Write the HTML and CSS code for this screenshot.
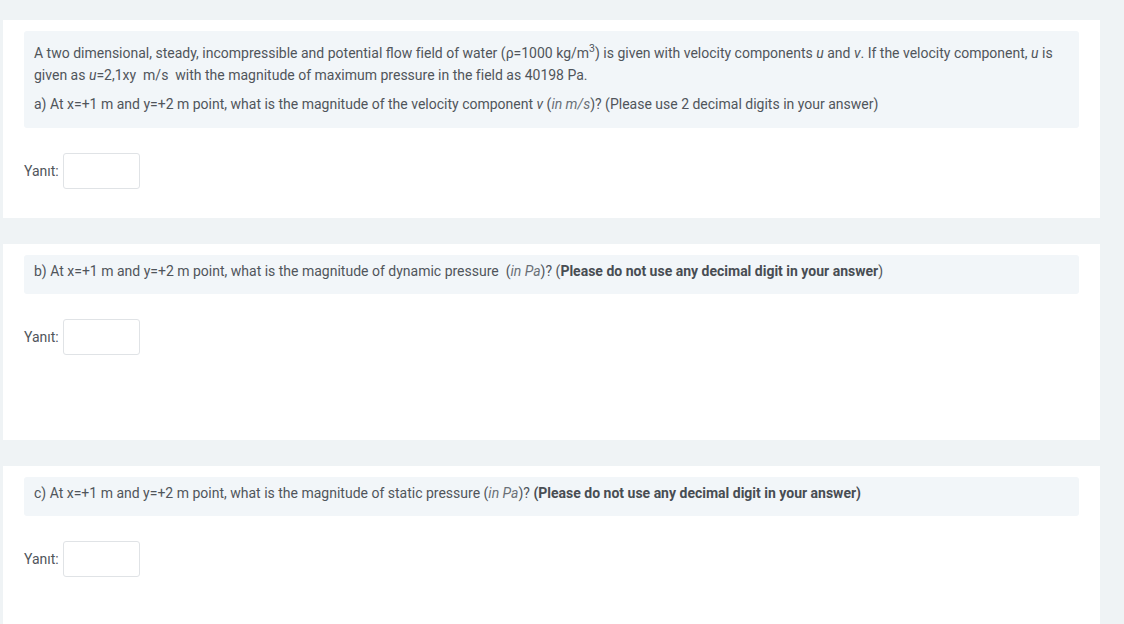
FILE: index.html
```html
<!DOCTYPE html>
<html lang="tr">
<head>
<meta charset="utf-8">
<title>Quiz</title>
<link rel="stylesheet" href="styles.css">
</head>
<body>
<div class="page">
  <div class="que que-first">
    <div class="qtext qtext-multi">
      <p>A two dimensional, steady, incompressible and potential flow field of water (ρ=1000 kg/m<sup>3</sup>) is given with velocity components <i>u</i> and <i>v</i>. If the velocity component, <i>u</i> is given as <i>u</i>=2,1xy&nbsp; m/s&nbsp; with the magnitude of maximum pressure in the field as 40198 Pa.</p>
      <p>a) At x=+1 m and y=+2 m point, what is the magnitude of the velocity component <i>v</i> <span class="unit">(<i>in m/s</i>)</span>? (Please use 2 decimal digits in your answer)</p>
    </div>
    <div class="answer">
      <label class="answer-label" for="a1">Yanıt:</label>
      <input class="answer-input" id="a1" type="text">
    </div>
  </div>

  <div class="que que-second">
    <div class="qtext">
      <p>b) At x=+1 m and y=+2 m point, what is the magnitude of dynamic pressure&nbsp; <span class="unit">(<i>in Pa</i>)</span>? (<b>Please do not use any decimal digit in your answer</b>)</p>
    </div>
    <div class="answer">
      <label class="answer-label" for="a2">Yanıt:</label>
      <input class="answer-input" id="a2" type="text">
    </div>
  </div>

  <div class="que que-third">
    <div class="qtext">
      <p>c) At x=+1 m and y=+2 m point, what is the magnitude of static pressure <span class="unit">(<i>in Pa</i>)</span>? <b>(Please do not use any decimal digit in your answer)</b></p>
    </div>
    <div class="answer">
      <label class="answer-label" for="a3">Yanıt:</label>
      <input class="answer-input" id="a3" type="text">
    </div>
  </div>
</div>
</body>
</html>
```

FILE: styles.css
```css
html, body {
  margin: 0;
  padding: 0;
  background: #eff3f5;
}

body {
  font-family: Roboto, "Liberation Sans", Arial, sans-serif;
  font-size: 14px;
  line-height: 22px;
  color: #50555b;
}

.page {
  padding: 20px 24px 0 3px;
  display: flex;
  flex-direction: column;
  gap: 26px;
}

.que {
  background: #ffffff;
  padding: 11px 21px 29px 21px;
}

.que-second {
  padding-bottom: 85px;
}

.que-third {
  padding-bottom: 80px;
}

.qtext {
  background: #f2f6f9;
  border-radius: 3px;
  padding: 5px 10px 12px 10px;
}

.qtext-multi {
  padding: 11px 10px 13px 10px;
}

.qtext p {
  margin: 0;
}

.qtext p + p {
  margin-top: 7px;
}

.qtext sup {
  font-size: 75%;
  line-height: 0;
  vertical-align: super;
}

.qtext b {
  font-weight: 700;
  color: #484d53;
}

.unit i {
  color: #6a7077;
}

.answer {
  margin-top: 25px;
  display: flex;
  align-items: center;
  gap: 4px;
}

.answer-label {
  color: #50555b;
}

.answer-input {
  box-sizing: border-box;
  width: 77px;
  height: 36px;
  border: 1px solid #e0e3e6;
  border-radius: 3px;
  background: #ffffff;
  margin: 0;
  padding: 0 6px;
  font: inherit;
}
```
